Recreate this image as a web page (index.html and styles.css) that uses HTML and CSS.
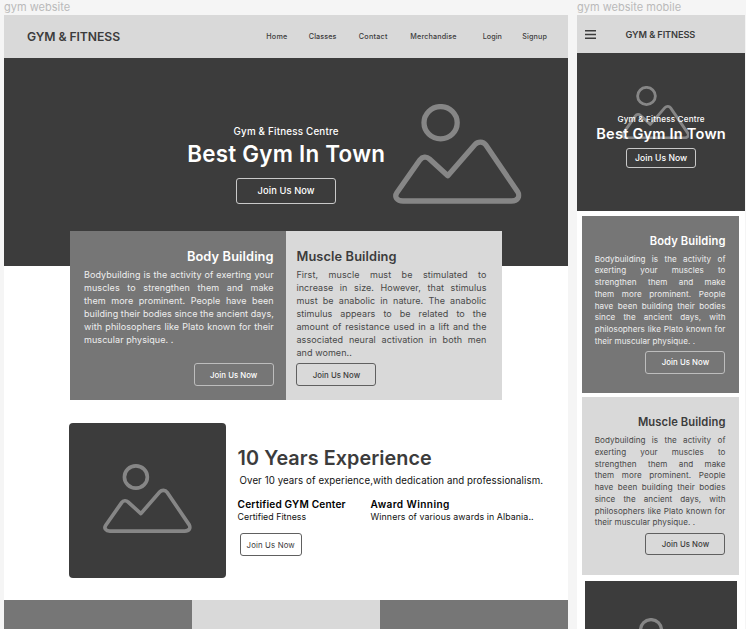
FILE: index.html
```html
<!DOCTYPE html>
<html lang="en">
<head>
<meta charset="utf-8">
<title>Gym website wireframes</title>
<link rel="stylesheet" href="styles.css">
</head>
<body>
<svg class="defs" width="0" height="0" aria-hidden="true">
  <symbol id="picture" viewBox="0 0 128.5 100">
    <ellipse cx="47.6" cy="18.7" rx="16.6" ry="16.1"/>
    <path d="M10 97H118.5C124.5 97 127.5 92.5 124.8 88L92.7 40.8C90.2 37.3 85 37.2 82 40.5L54.8 71.7L36.5 55C33.5 52.2 29.4 52.6 27 55.8L4 88.5C1 93 4 97 10 97Z"/>
  </symbol>
</svg>
<div class="canvas">
  <section class="artboard desktop">
    <div class="label">gym website</div>
    <div class="board">
      <header class="topbar">
        <div class="logo">GYM &amp; FITNESS</div>
        <nav class="nav">
          <a class="n-home">Home</a><a class="n-classes">Classes</a><a class="n-contact">Contact</a><a class="n-merch">Merchandise</a><a class="n-login">Login</a><a class="n-signup">Signup</a>
        </nav>
      </header>
      <div class="hero">
        <svg class="pic"><use href="#picture"/></svg>
        <div class="kicker">Gym &amp; Fitness Centre</div>
        <h1>Best Gym In Town</h1>
        <a class="btn">Join Us Now</a>
      </div>
      <div class="features">
        <article class="card dark">
          <h2>Body Building</h2>
          <p><span>Bodybuilding is the activity of exerting your</span> <span>muscles to strengthen them and make</span> <span>them more prominent. People have been</span> <span>building their bodies since the ancient days,</span> <span>with philosophers like Plato known for their</span> <span class="last">muscular physique. .</span></p>
          <a class="btn">Join Us Now</a>
        </article>
        <article class="card light">
          <h2>Muscle Building</h2>
          <p><span>First, muscle must be stimulated to</span> <span>increase in size. However, that stimulus</span> <span>must be anabolic in nature. The anabolic</span> <span>stimulus appears to be related to the</span> <span>amount of resistance used in a lift and the</span> <span>associated neural activation in both men</span> <span class="last">and women..</span></p>
          <a class="btn">Join Us Now</a>
        </article>
      </div>
      <div class="experience">
        <div class="photo"><svg class="pic"><use href="#picture"/></svg></div>
        <div class="about">
          <h2>10 Years Experience</h2>
          <p class="lead">Over 10 years of experience,with dedication and professionalism.</p>
          <div class="facts">
            <div>
              <h3 class="certified">Certified GYM Center</h3>
              <p class="fitness">Certified Fitness</p>
            </div>
            <div>
              <h3 class="award">Award Winning</h3>
              <p class="winners">Winners of various awards in Albania..</p>
            </div>
          </div>
          <a class="btn">Join Us Now</a>
        </div>
      </div>
      <div class="tiles"><div></div><div></div><div></div></div>
    </div>
  </section>
  <section class="artboard mobile">
    <div class="label">gym website mobile</div>
    <div class="board">
      <header class="topbar">
        <svg class="menu" viewBox="0 0 11 9"><path d="M0 .8H11M0 4.5H11M0 8.2H11"/></svg>
        <div class="logo">GYM &amp; FITNESS</div>
      </header>
      <div class="hero">
        <svg class="pic"><use href="#picture"/></svg>
        <div class="kicker">Gym &amp; Fitness Centre</div>
        <h1>Best Gym In Town</h1>
        <a class="btn">Join Us Now</a>
      </div>
      <article class="card dark">
        <h2>Body Building</h2>
        <p><span>Bodybuilding is the activity of</span> <span>exerting your muscles to</span> <span>strengthen them and make</span> <span>them more prominent. People</span> <span>have been building their bodies</span> <span>since the ancient days, with</span> <span>philosophers like Plato known for</span> <span class="last">their muscular physique. .</span></p>
        <a class="btn">Join Us Now</a>
      </article>
      <article class="card light">
        <h2>Muscle Building</h2>
        <p><span>Bodybuilding is the activity of</span> <span>exerting your muscles to</span> <span>strengthen them and make</span> <span>them more prominent. People</span> <span>have been building their bodies</span> <span>since the ancient days, with</span> <span>philosophers like Plato known for</span> <span class="last">their muscular physique. .</span></p>
        <a class="btn">Join Us Now</a>
      </article>
      <div class="photo"><svg class="pic"><use href="#picture"/></svg></div>
    </div>
  </section>
</div>
</body>
</html>
```
FILE: styles.css
```css
* { box-sizing: border-box; }

body {
  margin: 0;
  height: 629px;
  overflow: hidden;
  background: #f5f5f5;
  color: #3c3c3c;
  font-family: Inter, "Liberation Sans", sans-serif;
}

h1, h2, h3, p { margin: 0; }
h1, h2, h3 { font-weight: 600; white-space: nowrap; }

.defs { display: block; }

.canvas {
  display: flex;
  gap: 8.7px;
  height: 629px;
  padding-left: 4px;
  overflow: hidden;
}

.artboard { flex: none; display: flex; flex-direction: column; }
.desktop { width: 564.3px; }
.mobile { width: 168.3px; }

.label {
  flex: none;
  height: 15px;
  font-size: 11px;
  line-height: 15px;
  letter-spacing: .02px;
  color: #bababa;
  white-space: nowrap;
}

.board { flex: 1; background: #fff; }

.topbar { display: flex; align-items: center; background: #d9d9d9; }
.logo { font-weight: 600; white-space: nowrap; }

.pic {
  display: block;
  fill: none;
  stroke: #868686;
  stroke-width: 5.3;
  stroke-linejoin: round;
}

.btn {
  display: flex;
  align-items: center;
  justify-content: center;
  width: 80px;
  height: 22.5px;
  border: 1px solid #606060;
  border-radius: 3px;
  font-size: 7.8px;
  font-weight: 500;
  letter-spacing: .04px;
  white-space: nowrap;
}

.hero {
  position: relative;
  display: flex;
  flex-direction: column;
  align-items: center;
  background: #3c3c3c;
  color: #fff;
}
.hero .pic { position: absolute; }
.hero .kicker, .hero h1, .hero .btn { position: relative; white-space: nowrap; }
.hero .kicker { font-weight: 500; }
.hero .btn { border-color: #c9c9c9; }

.card { display: flex; flex-direction: column; }
.card p span {
  display: block;
  text-align: justify;
  text-align-last: justify;
  white-space: nowrap;
}
.card p .last { text-align-last: left; }
.dark { background: #767676; color: #fff; }
.dark p { color: #eee; }
.dark h2 { text-align: right; }
.dark .btn { align-self: flex-end; border-color: #bdbdbd; }
.light { background: #d9d9d9; }
.light p { color: #484848; }

.photo { background: #3c3c3c; }

/* Desktop */
.desktop .topbar { height: 42.5px; padding: 0 21px 0 23px; justify-content: space-between; }
.desktop .logo { font-size: 12.2px; letter-spacing: -.08px; }
.nav {
  display: grid;
  grid-template-columns: 42.5px 50px 51.5px 72.5px 39.5px 25px;
  font-size: 7.2px;
  font-weight: 500;
}
.n-home { letter-spacing: .2px; }
.n-classes { letter-spacing: .11px; }
.n-contact { letter-spacing: .26px; }
.n-merch { letter-spacing: .16px; }
.n-login { letter-spacing: .01px; }
.n-signup { letter-spacing: .13px; }

.desktop .hero { height: 208.5px; padding-top: 67.4px; }
.desktop .hero .pic { left: 389.3px; top: 46.5px; width: 128.5px; height: 100px; }
.desktop .kicker { font-size: 9.8px; line-height: 14px; letter-spacing: .2px; }
.desktop h1 { margin-top: .4px; font-size: 22.4px; line-height: 30px; letter-spacing: .25px; }
.desktop .hero .btn { margin-top: 8.4px; width: 100px; height: 26px; padding-bottom: 1px; font-size: 9.3px; letter-spacing: .1px; }

.features {
  position: relative;
  display: grid;
  grid-template-columns: 215.7px 215.7px;
  height: 169px;
  margin: -35px 0 0 66.3px;
}
.desktop .card { padding: 17px 12.3px 14.2px 13.7px; }
.desktop .light { padding: 17px 15.2px 14.2px 10.5px; }
.desktop .card h2 { font-size: 12.8px; line-height: 17px; letter-spacing: .12px; }
.desktop .card p { margin-top: 2.8px; font-size: 9px; line-height: 13px; letter-spacing: .07px; }
.desktop .card .btn { margin-top: auto; }

.experience { display: flex; gap: 11.3px; margin: 23px 0 0 64.7px; }
.desktop .photo { width: 157.6px; height: 154.5px; padding: 40.5px 0 0 34.5px; border-radius: 4px; }
.desktop .photo .pic { width: 88.8px; height: 69.2px; }
.about { padding-top: 22.3px; }
.about h2 { font-size: 19.8px; line-height: 27px; letter-spacing: .06px; }
.lead {
  margin: 1.5px 0 0 2px;
  color: #111;
  font-size: 9.7px;
  line-height: 14px;
  letter-spacing: .078px;
  white-space: nowrap;
}
.facts { display: grid; grid-template-columns: 133px auto; margin-top: 9.7px; color: #111; }
.facts h3 { color: #000; font-size: 10.1px; line-height: 14px; }
.facts p { font-size: 8.8px; line-height: 12px; white-space: nowrap; }
.certified { letter-spacing: .18px; }
.award { letter-spacing: .4px; }
.fitness { letter-spacing: .02px; }
.winners { letter-spacing: .1px; }
.about .btn { margin: 9.8px 0 0 2px; width: 62.3px; font-weight: 400; letter-spacing: .14px; }

.tiles { display: grid; grid-template-columns: 188.2px 188.2px 187.9px; height: 30px; margin-top: 22.5px; background: #767676; }
.tiles div:nth-child(2) { background: #d9d9d9; }

/* Mobile */
.mobile .topbar { height: 38.3px; padding-left: 8.3px; }
.menu { width: 11px; height: 9px; margin-right: 29.3px; fill: none; stroke: #3c3c3c; stroke-width: 1.5; }
.mobile .logo { font-size: 9.2px; letter-spacing: -.1px; }
.mobile .hero { height: 157.7px; padding-top: 59.4px; }
.mobile .hero .pic { left: 43.6px; top: 32.3px; width: 68.8px; height: 53.5px; }
.mobile .kicker { font-size: 8.1px; line-height: 12px; letter-spacing: .18px; }
.mobile h1 { margin-top: 0; font-size: 14.6px; line-height: 18px; letter-spacing: .21px; }
.mobile .hero .btn { margin-top: 5.3px; width: 70px; height: 20px; font-size: 8.6px; letter-spacing: .04px; }

.mobile .card { width: 157.5px; height: 177.5px; margin: 5px 0 0 5px; padding: 16.8px 14px 0 12.7px; }
.mobile .light { margin-top: 4px; }
.mobile .card h2 { font-size: 11.2px; line-height: 16px; letter-spacing: .1px; text-align: right; }
.mobile .card p { margin-top: 4.8px; font-size: 8.1px; line-height: 11.77px; letter-spacing: .07px; }
.mobile .card .btn { align-self: flex-end; margin-top: 3.3px; }
.mobile .photo { width: 152px; height: 150px; margin: 6.3px 0 0 7.7px; padding: 36.7px 0 0 36px; }
.mobile .photo .pic { width: 81px; height: 63px; }
```
